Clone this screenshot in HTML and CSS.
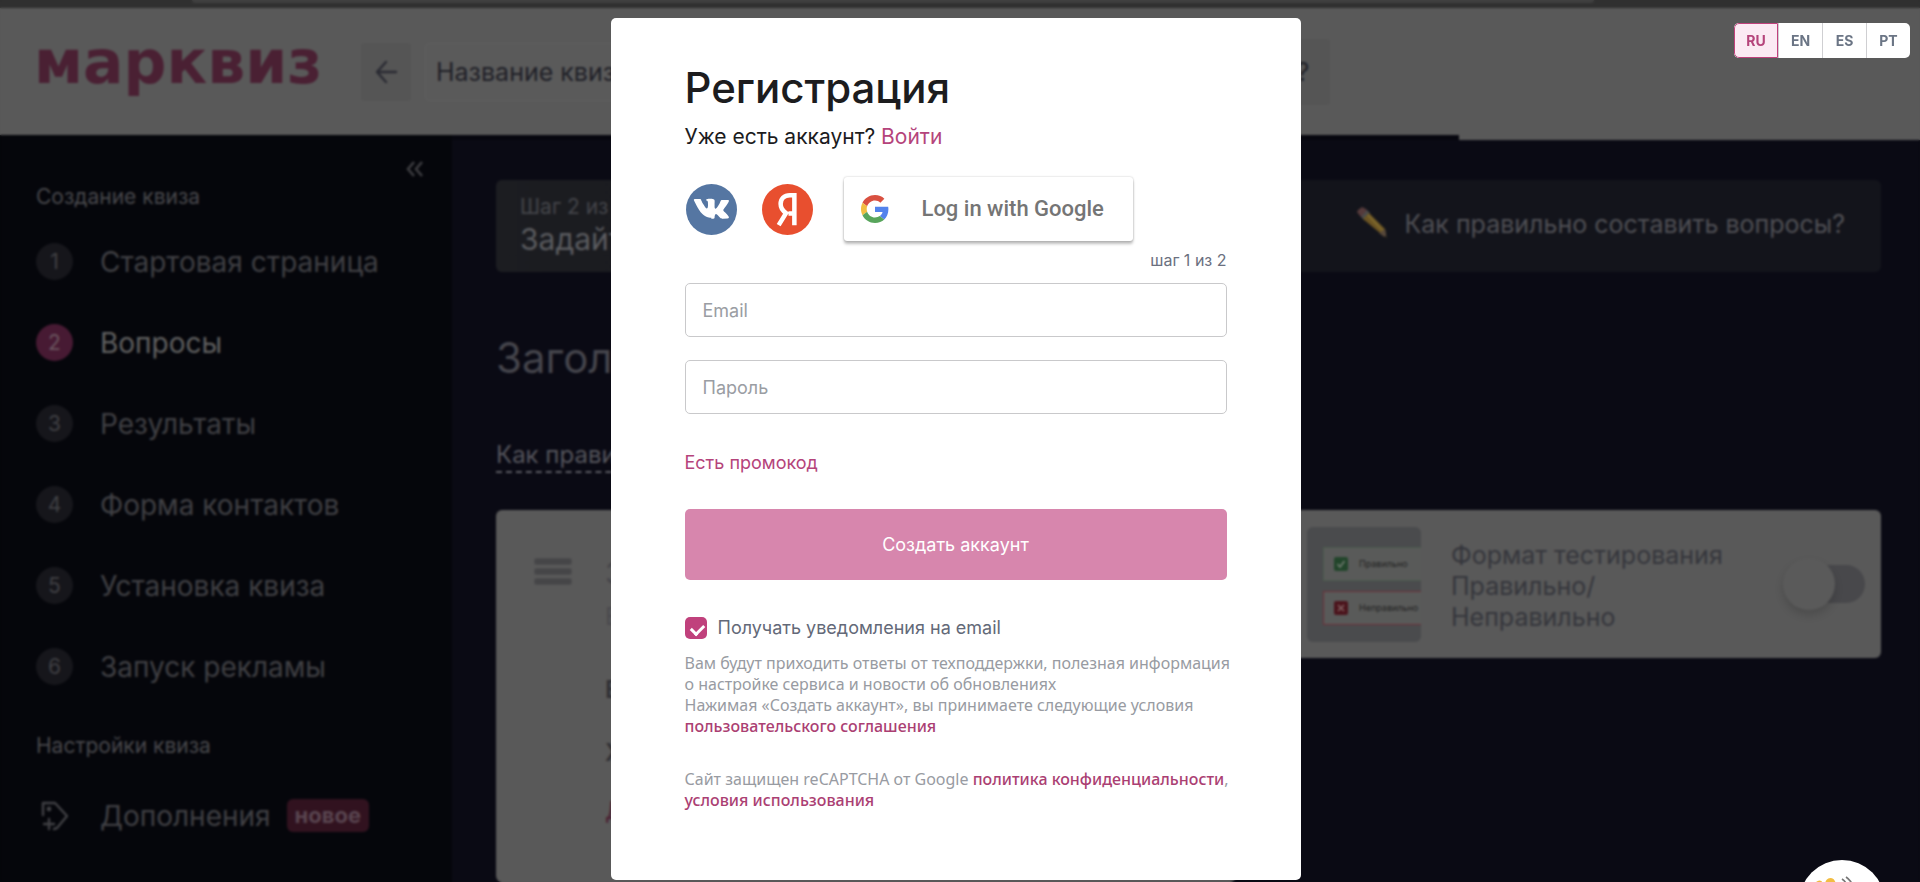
FILE: index.html
```html
<!DOCTYPE html>
<html lang="ru">
<head>
<meta charset="utf-8">
<meta name="viewport" content="width=device-width, initial-scale=1">
<title>Марквиз — Регистрация</title>
<link rel="stylesheet" href="styles.css">
</head>
<body>
<div class="workspace">
  <div class="tabstrip"><div class="tabstrip-address"></div></div>
  <header class="topbar">
    <a class="logo" href="#">марквиз</a>
    <button class="back" type="button" aria-label="Назад">
      <svg width="24" height="26" viewBox="0 0 24 26" fill="none" stroke="currentColor" stroke-width="2.4" stroke-linecap="round" stroke-linejoin="round"><path d="M22 13H3M12 3 3 13l9 10"/></svg>
    </button>
    <input class="quiz-name" type="text" value="Название квиза" aria-label="Название квиза">
    <button class="help" type="button">?</button>
  </header>
  <div class="progress"><div class="progress-done"></div></div>
  <div class="columns">
    <nav class="sidebar">
      <button class="collapse" type="button" aria-label="Свернуть">
        <svg width="18" height="16" viewBox="0 0 18 16" fill="none" stroke="currentColor" stroke-width="2.6"><path d="M8 1 2 8l6 7M16 1l-6 7 6 7"/></svg>
      </button>
      <h2 class="side-title">Создание квиза</h2>
      <ul class="steps">
        <li><a class="step" href="#"><span class="step-num">1</span>Стартовая страница</a></li>
        <li><a class="step step-active" href="#"><span class="step-num">2</span>Вопросы</a></li>
        <li><a class="step" href="#"><span class="step-num">3</span>Результаты</a></li>
        <li><a class="step" href="#"><span class="step-num">4</span>Форма контактов</a></li>
        <li><a class="step" href="#"><span class="step-num">5</span>Установка квиза</a></li>
        <li><a class="step" href="#"><span class="step-num">6</span>Запуск рекламы</a></li>
      </ul>
      <h2 class="side-title side-title-settings">Настройки квиза</h2>
      <a class="step" href="#">
        <span class="step-icon"><svg width="30" height="32" viewBox="0 0 30 32" fill="none" stroke="currentColor" stroke-width="2.4" stroke-linecap="round" stroke-linejoin="round"><path d="M4 15V3h12l12 13-10 12-3 1"/><path d="M10 19v10M5 24h10"/><circle cx="10" cy="9" r="1.2"/></svg></span>
        Дополнения <span class="badge">новое</span>
      </a>
    </nav>
    <main class="content">
      <section class="banner">
        <div class="banner-head">
          <p class="banner-step">Шаг 2 из 6</p>
          <p class="banner-title">Задайте</p>
        </div>
        <a class="banner-tip" href="#">
          <svg class="pencil" width="32" height="34" viewBox="0 0 32 34"><path d="M2 3 6 0l4 2 3 4-5 6-4-3-3-4z" fill="#553a3b"/><path d="m11 3 3 3-6 7-3-3z" fill="#4b4b4b"/><path d="m13 6 16 16 1 6-6-2L7 12z" fill="#6b5423"/><path d="m12 8 15 16" stroke="#7d672c" stroke-width="2.5"/><path d="m29 22 2 10-8-6z" fill="#57483a"/><path d="m30 29 1 3-3-2z" fill="#111"/></svg>
          Как правильно составить вопросы?
        </a>
      </section>
      <h1 class="page-title">Заголовок</h1>
      <a class="hint" href="#">Как правильно</a>
      <div class="cards">
        <section class="card questions">
          <svg class="burger" width="38" height="32" viewBox="0 0 38 32" fill="#454547" stroke="#4c4c4e"><rect x=".5" y=".5" width="37" height="6" rx="2"/><rect x=".5" y="10.500" width="37" height="6" rx="2"/><rect x=".5" y="20.500" width="37" height="6" rx="2"/></svg>
          <div class="question">
            <p class="q-title">Задайте</p>
            <p class="q-note">Введите</p>
            <p class="q-option">Вариант</p>
            <p class="q-option">Хочу</p>
            <p class="q-add">Добавить</p>
          </div>
        </section>
        <section class="card testing">
          <div class="thumb" aria-hidden="true">
            <div class="answer answer-ok"><svg width="14" height="14" viewBox="0 0 14 14"><rect width="14" height="14" rx="2" fill="#22452b"/><path d="m3.500 7 2.500 3 4.500-6" fill="none" stroke="#707a70" stroke-width="1.600"/></svg>Правильно</div>
            <div class="answer answer-bad"><svg width="14" height="14" viewBox="0 0 14 14"><rect width="14" height="14" rx="2" fill="#4b141c"/><path d="m4 4 6 6M10 4l-6 6" stroke="#806060" stroke-width="1.600"/></svg>Неправильно</div>
          </div>
          <label class="testing-label" for="testing">Формат тестирования Правильно/<br>Неправильно</label>
          <input class="switch" id="testing" type="checkbox" role="switch">
        </section>
      </div>
    </main>
  </div>
</div>

<div class="overlay">
  <div class="modal" role="dialog" aria-modal="true" aria-labelledby="title">
    <h2 class="title" id="title">Регистрация</h2>
    <p class="subtitle">Уже есть аккаунт? <a href="#">Войти</a></p>
    <div class="social">
      <button class="round" type="button" aria-label="ВКонтакте">
        <svg width="51" height="51" viewBox="0 0 52 52"><circle cx="26" cy="26" r="26" fill="#5576a2"/><path transform="translate(2 2) scale(.94)" d="M25.300 35.500h2.300s.7-.1 1-.5c.3-.3.3-1 .3-1s0-3 1.300-3.500c1.400-.4 3.100 2.900 5 4.200 1.400 1 2.500.8 2.500.8l5-.1s2.600-.2 1.400-2.200c-.1-.2-.7-1.500-3.700-4.300-3.100-2.900-2.700-2.400 1.100-7.400 2.300-3 3.200-4.900 2.900-5.700-.3-.8-2-.6-2-.6l-5.600.1s-.4-.1-.7.1c-.3.200-.5.600-.5.600s-.9 2.400-2.100 4.400c-2.500 4.200-3.500 4.500-3.900 4.200-1-.6-.7-2.500-.7-3.900 0-4.200.6-6-1.300-6.400-.6-.1-1-.2-2.600-.3-2 0-3.700 0-4.600.5-.6.300-1.100 1-.8 1 .4.100 1.200.2 1.600.8.600.8.500 2.500.5 2.500s.4 4.900-.8 5.500c-.8.500-2-.5-4.400-4.700-1.300-2.100-2.200-4.500-2.200-4.500s-.2-.4-.5-.6c-.4-.3-.9-.4-.9-.4l-5.300.1s-.8 0-1.100.4c-.3.300 0 .9 0 .9s4.200 9.800 8.900 14.700c4.300 4.500 9.900 4.300 9.900 4.300z" fill="#fff"/></svg>
      </button>
      <button class="round" type="button" aria-label="Яндекс">
        <svg width="51" height="51" viewBox="0 0 52 52"><circle cx="26" cy="26" r="26" fill="#e84f2f"/><path d="M33 42V11.500h-4.500c-6 0-9.500 3.500-9.500 9 0 4.300 2 6.800 5.500 9.200L17 42M33 30h-6" fill="none" stroke="#fff" stroke-width="4.600"/></svg>
      </button>
      <button class="google" type="button">
        <svg width="28" height="28" viewBox="0 0 48 48"><path fill="#d95040" d="M24 9.500c3.540 0 6.710 1.220 9.210 3.600l6.850-6.850C35.900 2.380 30.470 0 24 0 14.620 0 6.510 5.380 2.560 13.220l7.980 6.190C12.430 13.720 17.740 9.500 24 9.500z"/><path fill="#5383ec" d="M46.980 24.550c0-1.570-.15-3.090-.38-4.550H24v9.020h12.940c-.58 2.960-2.260 5.480-4.780 7.180l7.730 6c4.510-4.180 7.090-10.360 7.090-17.650z"/><path fill="#f2be42" d="M10.530 28.590c-.48-1.450-.76-2.990-.76-4.590s.27-3.140.76-4.590l-7.980-6.190C.92 16.460 0 20.120 0 24c0 3.880.92 7.540 2.560 10.780z"/><path fill="#58a55c" d="M24 48c6.480 0 11.930-2.130 15.890-5.810l-7.730-6c-2.150 1.450-4.920 2.300-8.160 2.300-6.260 0-11.570-4.220-13.470-9.910l-7.980 6.190C6.510 42.620 14.620 48 24 48z"/></svg>
        Log in with Google
      </button>
    </div>
    <form class="form" action="#">
      <p class="stage">шаг 1 из 2</p>
      <input class="field" type="email" placeholder="Email" aria-label="Email">
      <input class="field" type="password" placeholder="Пароль" aria-label="Пароль">
      <a class="promo" href="#">Есть промокод</a>
      <button class="submit" type="submit">Создать аккаунт</button>
      <label class="notify"><input class="check" type="checkbox" checked>Получать уведомления на email</label>
    </form>
    <p class="legal">Вам будут приходить ответы от техподдержки, полезная информация<br>о настройке сервиса и новости об обновлениях<br>Нажимая «Создать аккаунт», вы принимаете следующие условия<br><a href="#">пользовательского соглашения</a></p>
    <p class="legal legal-captcha">Сайт защищен reCAPTCHA от Google <a href="#">политика конфиденциальности</a>,<br><a href="#">условия использования</a></p>
  </div>
</div>

<div class="langs" role="group" aria-label="Язык">
  <button class="lang lang-active" type="button">RU</button>
  <button class="lang" type="button">EN</button>
  <button class="lang" type="button">ES</button>
  <button class="lang" type="button">PT</button>
</div>
<button class="chat" type="button" aria-label="Чат">
  <svg width="86" height="86" viewBox="0 0 86 86"><path d="m22 27 4-3 16 20-4 4z" fill="#efb93f"/><rect x="20" y="20" width="9" height="28" rx="4" fill="#efb93f" transform="rotate(-28 24 34)"/><rect x="31" y="17" width="10" height="31" rx="5" fill="#f2bd42" transform="rotate(-25 36 33)"/><path d="M43 19c3 2 5 5 6 9M47 17c3 2 6 6 7 10" fill="none" stroke="#777" stroke-width="1.600"/></svg>
</button>
</body>
</html>
```
FILE: styles.css
```css
*{box-sizing:border-box}
html{overflow:hidden}
body{margin:0;background:#0a0a14;font-family:Inter,"Liberation Sans",sans-serif;color:#1c1c1e}
h1,h2,p,ul{margin:0;padding:0;font-weight:400}
ul{list-style:none}
a{color:inherit;text-decoration:none}
button{border:0;padding:0;margin:0;background:none;font:inherit;color:inherit;cursor:pointer}
svg{display:block;flex:none}

/* editor behind the dialog */
.workspace{display:flex;flex-direction:column;height:100vh;overflow:hidden}
.tabstrip{flex:none;height:8px;padding:0 17% 0 10%;background:#303030}
.tabstrip-address{height:3px;background:#404040;border-radius:0 0 12px 12px}
.topbar{flex:none;display:flex;align-items:center;height:127px;padding:0 36px 0 34px;background:#595959}
.logo{width:327px;padding-bottom:20px;font-family:"DejaVu Sans",sans-serif;font-size:60px;line-height:60px;font-weight:700;color:#4a2033}
.back{display:flex;align-items:center;justify-content:center;width:50px;height:58px;margin-right:14px;background:#555;border-radius:4px;color:#2a2b33}
.quiz-name{width:300px;height:58px;padding:0 10px;border:1px solid #5f5f5f;border-radius:4px;background:#5a5a5a;font:25px/30px Inter,sans-serif;color:#1f2027}
.help{width:60px;height:66px;margin-left:545px;padding-left:6px;background:#555;border-radius:4px;font-size:25px;color:#1f2027}
.progress{flex:none;height:5px;background:#595959}
.progress-done{width:76%;height:5px;background:#07070f}
.columns{flex:1;display:flex;min-height:0}
.sidebar{flex:none;width:452px;margin-top:-5px;padding:24px 36px 0;background:#05060b;color:#404044}
.collapse{display:flex;align-items:center;height:20px;margin:0 -8px 0 auto;color:#3c3c40}
.side-title{margin-top:6px;font-size:21px;line-height:24px;color:#48484c}
.steps{margin-top:12px}
.step{display:flex;align-items:center;height:81px;font-size:28px;line-height:34px}
.step-num{display:flex;align-items:center;justify-content:center;width:37px;height:37px;margin-right:27px;border-radius:50%;background:#16161b;font-size:21px;line-height:24px}
.step-active{color:#606060}
.step-active .step-num{background:#471a33;color:#6a555f}
.step-icon{width:37px;margin-right:27px;padding-left:3px}
.side-title-settings{margin:27px 0 17px}
.badge{height:33px;margin-left:16px;padding:0 8px;border-radius:6px;background:#31121f;font-size:22px;line-height:33px;font-weight:700;color:#594550}
.content{flex:1;min-width:0;display:flex;flex-direction:column;padding:40px 39px 0 44px;background:#0a0a14}
.banner{flex:none;display:flex;align-items:center;justify-content:space-between;height:92px;padding:0 36px 0 24px;border-radius:6px;background:linear-gradient(90deg,#1c1d21,#13141b 60%)}
.banner-step{font-size:21px;line-height:26px;color:#44454a}
.banner-title{font-size:30px;line-height:38px;color:#5a5b5f}
.banner-tip{display:flex;align-items:center;gap:16px;padding-bottom:4px;font-size:25px;line-height:30px;color:#505055}
.page-title{margin-top:60px;font-size:42px;line-height:52px;color:#45454c}
.hint{align-self:flex-start;margin-top:54px;border-bottom:2px dashed #5a5a62;font-size:24px;line-height:33px;color:#55555c}
.cards{flex:1;min-height:0;display:flex;align-items:flex-start;justify-content:space-between;margin-top:37px}
.card{background:#595959;border-radius:6px}
.questions{display:flex;align-self:stretch;width:740px;padding:48px 38px 0}
.burger{margin-right:33px}
.question{color:#303035}
.q-title{font-size:30px;line-height:46px;margin-top:-8px;color:#45454a}
.q-note{font-size:24px;line-height:42px;color:#4a4a4e}
.q-option{margin:31px 0 -10px;font-size:24px;line-height:42px;font-weight:600}
.q-add{margin-top:26px;font-size:24px;line-height:42px;color:#4a2033}
.testing{display:flex;align-items:center;height:148px;padding:0 16px}
.thumb{width:114px;height:115px;margin-right:30px;padding:20px 0 0 16px;overflow:hidden;border-radius:6px;background:#4a4b4d}
.answer{display:flex;align-items:center;gap:11px;width:98px;height:34px;margin-bottom:10px;padding-left:10px;border:1px solid #4a5a4c;border-right:0;background:#595a59;font-size:9px;line-height:12px;color:#222}
.answer-bad{border-color:#6a2f38}
.testing-label{width:342px;padding-top:4px;font-size:25px;line-height:31px;color:#35363c}
.switch{appearance:none;flex:none;display:flex;align-items:center;width:72px;height:38px;margin:0;border-radius:19px;background:#48484b}
.switch::before{content:"";width:52px;height:52px;margin-left:-10px;border-radius:50%;background:#5a5a5a;box-shadow:0 5px 8px rgba(0,0,0,.15)}

/* dialog */
.overlay{position:absolute;inset:0;display:flex;align-items:flex-start;justify-content:center;padding:18px 9px 0 0;backdrop-filter:blur(1px)}
.modal{width:36%;min-width:690px;padding:44px 74px 69px;border-radius:5px;background:#fff}
.modal a{color:#b5447b}
.title{font-size:42px;line-height:52px;font-weight:500}
.subtitle{margin-top:9px;font-size:21px;line-height:28px}
.social{display:flex;align-items:center;margin-top:26px}
.round{margin:0 24px 0 1px}
.google{display:flex;align-items:center;gap:33px;height:64px;margin-left:7px;padding:0 29px 0 17px;border-radius:3px;box-shadow:0 0 2px rgba(0,0,0,.25),0 3px 3px rgba(0,0,0,.25);font:500 22px/28px Roboto,sans-serif;color:#757575}
.form{display:flex;flex-direction:column}
.stage{align-self:flex-end;margin:9px 0 13px;font-size:16px;line-height:20px;color:#6b7080}
.field{height:54px;margin-bottom:23px;padding:0 17px;border:1px solid #c9c9cb;border-radius:5px;background:#fff;font:18px/24px Inter,sans-serif;color:#1c1c1e}
.field::placeholder{color:#9a9da3}
.promo{align-self:flex-start;margin-top:14px;font-size:18px;line-height:24px}
.submit{height:71px;margin-top:34px;border-radius:5px;background:#d786ad;font-size:18px;line-height:24px;color:#fff}
.notify{display:flex;align-items:center;gap:11px;margin-top:36px;font-size:18px;line-height:24px;color:#636978}
.check{appearance:none;width:22px;height:22px;margin:0;border-radius:5px;background:#c0417c}
.check::before{content:"";display:block;width:6px;height:10px;margin:5px 0 0 8px;border:solid #fff;border-width:0 3px 3px 0;transform:rotate(45deg)}
.legal{margin-top:13px;font-family:"Noto Sans",sans-serif;font-size:16px;line-height:21px;color:#989ba2;white-space:nowrap}
.legal a{font-weight:500;color:#ab3f73}
.legal-captcha{margin-top:32px}

.langs{position:absolute;top:23px;right:10px;display:flex;border-radius:5px;background:#fff;overflow:hidden}
.lang{width:44px;height:35px;border-left:1px solid #cfcfd2;font-size:14px;line-height:20px;font-weight:700;color:#6b7585}
.lang-active{border:1px solid #c0417c;border-radius:5px 0 0 5px;background:#fbeaf3;color:#b5447b}
.chat{position:fixed;top:860px;right:35px;width:86px;height:86px;border-radius:50%;background:#fff}
```
